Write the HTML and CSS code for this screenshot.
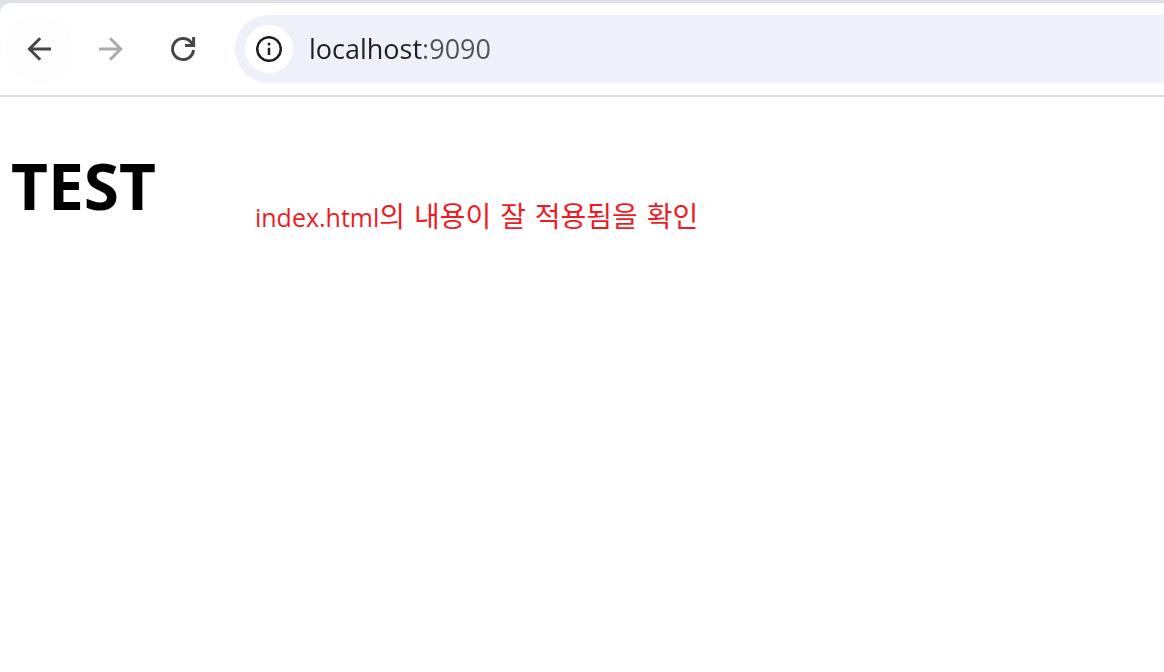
FILE: index.html
```
<!DOCTYPE html>
<html lang="ko">
<head>
<meta charset="utf-8">
<meta name="viewport" content="width=device-width, initial-scale=1">
<title>TEST</title>
<link rel="stylesheet" href="styles.css">
</head>
<body>
<div class="browser">
  <header class="toolbar">
    <nav class="nav-buttons" aria-label="Navigation">
      <button class="nav-button nav-button-active" type="button" aria-label="Back">
        <svg class="icon" viewBox="0 0 24 24" aria-hidden="true"><path d="M24 12H3M13.2 1.2 2.4 12 13.2 22.8"/></svg>
      </button>
      <button class="nav-button" type="button" aria-label="Forward" disabled>
        <svg class="icon" viewBox="0 0 24 24" aria-hidden="true"><path d="M0 12h21M11 1.2 21.8 12 11 22.8"/></svg>
      </button>
      <button class="nav-button" type="button" aria-label="Reload">
        <svg class="icon" viewBox="0 0 24 24" aria-hidden="true"><path d="M22.5 13A10.5 10.5 0 1 1 20 5.2L22.6 8.6M22.6 0v8.6H14"/></svg>
      </button>
    </nav>
    <form class="address-bar">
      <button class="site-info" type="button" aria-label="Site information">
        <svg class="info-icon" viewBox="0 0 26 26" aria-hidden="true"><circle cx="13" cy="13" r="11.8"/><path d="M13 11.8v7.2M13 6.8v2.6"/></svg>
      </button>
      <input class="address" type="text" aria-label="Address" value="localhost:9090" spellcheck="false">
    </form>
  </header>
  <main class="page">
    <h1 class="title">TEST</h1>
    <p class="note"><span class="note-file">index.html</span>의 내용이 잘 적용됨을 확인</p>
  </main>
</div>
</body>
</html>
```
FILE: styles.css
```
* {
  box-sizing: border-box;
}

body {
  margin: 0;
  background: #fff;
  font-family: "Noto Sans", "Noto Sans CJK KR", sans-serif;
}

.browser {
  padding-top: 3px;
  background: #dee1e6;
}

.toolbar {
  display: flex;
  align-items: center;
  gap: 18px;
  padding: 12px 0 12px 5px;
  background: #fff;
  border-bottom: 2px solid #e0e0e0;
  border-top-left-radius: 10px;
}

.nav-buttons {
  display: flex;
  gap: 4px;
}

.nav-button {
  display: grid;
  place-items: center;
  width: 68px;
  height: 68px;
  padding: 0;
  border: 0;
  border-radius: 50%;
  background: none;
  color: #474747;
}

.nav-button-active {
  background: #fdfdfd;
}

.nav-button:disabled {
  color: #ababab;
}

.icon {
  width: 24px;
  height: 24px;
  overflow: visible;
  fill: none;
  stroke: currentColor;
  stroke-width: 3;
}

.address-bar {
  display: flex;
  flex: 1;
  align-items: center;
  gap: 16px;
  height: 68px;
  padding-left: 10px;
  border-radius: 34px 0 0 34px;
  background: #eef1f9;
}

.site-info {
  display: grid;
  flex: none;
  place-items: center;
  width: 48px;
  height: 48px;
  padding: 0;
  border: 0;
  border-radius: 50%;
  background: #fff;
  color: #1f1f1f;
}

.info-icon {
  width: 26px;
  height: 26px;
  fill: none;
  stroke: currentColor;
  stroke-width: 2.5;
}

/* The host is darker than the port that follows it. */
.address {
  flex: 1;
  min-width: 0;
  padding: 0;
  border: 0;
  outline: 0;
  background: linear-gradient(90deg, #1f1f1f 113px, #505256 113px);
  background-clip: text;
  color: transparent;
  font: 27px/40px "Open Sans", sans-serif;
}

.page {
  display: flex;
  align-items: flex-start;
  gap: 99px;
  min-height: calc(100vh - 100px);
  padding: 44px 11px 0;
  background: #fff;
}

.title {
  margin: 0;
  font-size: 64px;
  line-height: 90px;
  font-weight: 700;
  color: #000;
}

.note {
  margin: 56px 0 0;
  font-family: "DejaVu Sans", "Noto Sans CJK KR", sans-serif;
  font-size: 28px;
  line-height: 40px;
  color: #ed1c24;
}

.note-file {
  font-family: "Open Sans", sans-serif;
  font-size: 25px;
}
```
